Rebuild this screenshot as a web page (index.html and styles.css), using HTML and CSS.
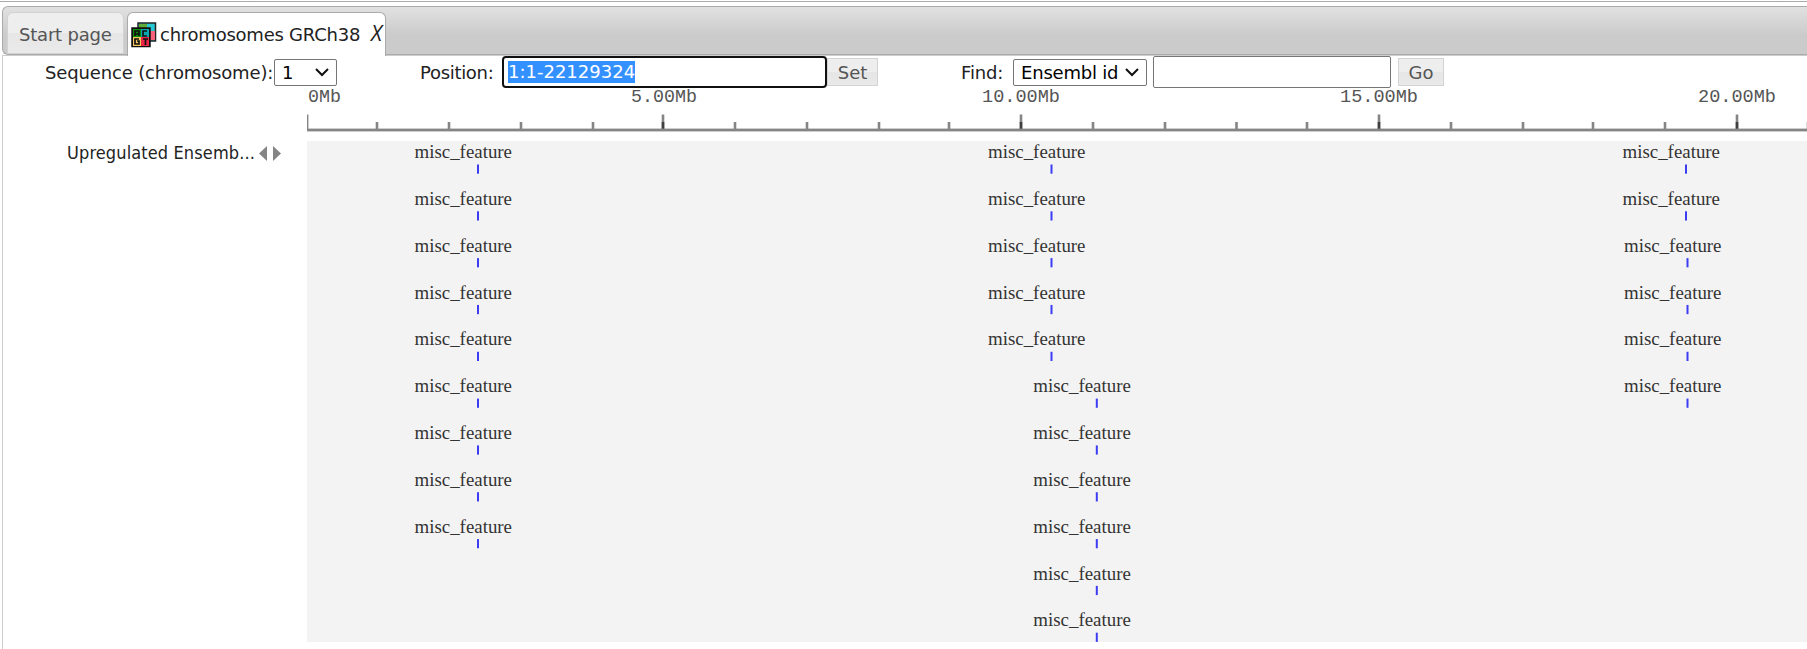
FILE: index.html
```html
<!DOCTYPE html>
<html lang="en">
<head>
<meta charset="utf-8">
<title>Genome browser</title>
<link rel="stylesheet" href="styles.css">
</head>
<body>
<div class="tabs">
  <div class="tab"><span class="t-start">Start page</span></div>
  <div class="tab active">
    <svg class="logo" width="26" height="26" viewBox="0 0 26 26">
      <rect x="7" y="1" width="17.5" height="18" fill="#29c8d2" stroke="#222" stroke-width="1.5"/>
      <path d="M8 2h8v6H8z" fill="#60aa38"/><path d="M18 9h6v9h-6z" fill="#f6607a"/>
      <rect x="1" y="6" width="18" height="18.5" fill="#111" stroke="#111" stroke-width="1.5"/>
      <path d="M2 7h8v8H2z" fill="#079008"/><path d="M10 7h8v8h-8z" fill="#0aa6b2"/>
      <path d="M2 15h8v9H2z" fill="#f5c45b"/><path d="M10 15h8v9h-8z" fill="#ec2448"/>
      <path d="M4 14V9h4v5M4 12h4M16 9h-4v5h4M8 17H4v5h4v-3H6M12 17h5M14.500 17v6" fill="none" stroke="#111" stroke-width="1.7"/>
    </svg>
    <span class="t-chrom">chromosomes GRCh38</span><span class="close">X</span>
  </div>
</div>
<main class="panel">
  <div class="toolbar">
    <span class="label l-seq">Sequence (chromosome):</span>
    <div class="select s-seq"><span>1</span><svg width="14" height="9" viewBox="0 0 14 9"><path d="M1 1l6 6 6-6"/></svg></div>
    <span class="label l-pos">Position:</span>
    <div class="input focus"><span class="sel">1:1-22129324</span></div>
    <div class="btn b-set">Set</div>
    <span class="label l-find">Find:</span>
    <div class="select s-find"><span>Ensembl id</span><svg width="14" height="9" viewBox="0 0 14 9"><path d="M1 1l6 6 6-6"/></svg></div>
    <div class="input find"></div>
    <div class="btn b-go">Go</div>
  </div>
  <div class="view">
    <div class="names"><span class="track">Upregulated Ensemb...</span><svg width="22" height="15" viewBox="0 0 22 15"><path d="M8 0v15L0 7.500zM14 0v15l8-7.500z" fill="#858585"/></svg></div>
    <svg class="plot" id="plot" width="1500" height="561" viewBox="307 88 1500 561"></svg>
  </div>
</main>
<script src="plot.js"></script>
</body>
</html>
```
FILE: plot.js
```js
const plot = document.getElementById('plot');
function add(name, attrs, text) {
  const el = document.createElementNS('http://www.w3.org/2000/svg', name);
  for (const key in attrs) el.setAttribute(key, attrs[key]);
  if (text) el.textContent = text;
  plot.appendChild(el);
}
add('rect', { x: 307, y: 141, width: 1500, height: 501, class: 'bg' });

// Ruler
[377, 449, 521, 593, 663, 735, 807, 879, 949, 1021, 1093, 1165, 1236.5, 1307, 1379, 1451, 1523, 1593, 1665, 1737, 1808]
  .forEach(x => add('rect', { x: x - 1.3, y: 122, width: 2.6, height: 8, class: 'minor' }));
[663, 1021, 1379, 1737].forEach(x => {
  add('rect', { x: x - 1.3, y: 114.5, width: 2.6, height: 8, class: 'minor' });
  add('rect', { x: x - 1.3, y: 122, width: 2.6, height: 8, class: 'major' });
});
add('rect', { x: 307, y: 128.6, width: 1500, height: 2.8, class: 'minor' });
add('rect', { x: 307, y: 114.5, width: 1.4, height: 16, class: 'minor' });
[['0Mb', 308, 33], ['5.00Mb', 631, 66], ['10.00Mb', 982, 78], ['15.00Mb', 1340, 78], ['20.00Mb', 1698, 78]]
  .forEach(([t, x, w]) => add('text', { x, y: 102, textLength: w, lengthAdjust: 'spacingAndGlyphs', class: 'scale' }, t));

// Features: label x, marker x, first row, last row
[[414.5, 478, 0, 8], [988, 1051.5, 0, 4], [1033.3, 1096.8, 5, 10], [1622.5, 1686, 0, 1], [1624, 1687.5, 2, 5]]
  .forEach(([x, mark, from, to]) => {
    for (let r = from; r <= to; r++) {
      const y = r * 46.82;
      add('text', { x, y: 158.2 + y, textLength: 97.5, lengthAdjust: 'spacingAndGlyphs', class: 'feature' }, 'misc_feature');
      add('rect', { x: mark - 1, y: 164.5 + y, width: 2, height: 9.2, class: 'mark' });
    }
  });
```
FILE: styles.css
```css
* { box-sizing: border-box; }
body { margin: 0; height: 649px; overflow: hidden; background: #fff; border-top: 1px solid #fff; padding-left: 2px; font: 18px "DejaVu Sans", sans-serif; color: #222; position: relative; }
body::before { content: ""; position: absolute; left: 0; right: 0; top: 0; height: 1px; background: #aaa; }
.tabs { height: 49px; margin-top: 5px; display: flex; align-items: flex-start; gap: 3px; padding: 5px 0 0 4px; border: 1px solid #aaa; border-right: 0; border-radius: 6px 0 0 6px; background: linear-gradient(#e1e1e1, #cbcbcb 60%); }
.tab { width: 117px; height: 42px; padding-left: 11px; border: 1px solid #d3d3d3; border-radius: 6px 6px 0 0; background: linear-gradient(#eee 50%, #e6e6e6 50%, #eaeaea); color: #555; line-height: 43px; white-space: nowrap; letter-spacing: -0.2px; }
.tab.active { width: 259px; height: 44px; padding-left: 3px; display: flex; border-color: #aaa; border-bottom: 0; background: #fff; color: #222; z-index: 1; }
.logo { margin-top: 9px; flex: none; }
.t-chrom { width: 210px; margin-left: 3px; letter-spacing: -0.24px; }
.close { line-height: 40px; font-family: "Open Sans", sans-serif; font-size: 21px; font-style: italic; margin-left: 1px; }
.panel { border-left: 1px solid #ccc; border-top: 1px solid #ccc; height: 594px; }
.toolbar { height: 32px; display: flex; align-items: center; white-space: nowrap; }
.label { flex: none; letter-spacing: -0.15px; }
.l-seq { width: 229px; margin-left: 42px; }
.l-pos { width: 82px; margin-left: 83px; letter-spacing: -0.3px; }
.l-find { width: 52px; margin-left: 83px; }
.select { flex: none; height: 27px; border: 1px solid #767676; border-radius: 2px; display: flex; align-items: center; justify-content: space-between; padding: 0 7px; color: #000; background: #fff; }
.select svg { flex: none; }
.select path { fill: none; stroke: #111; stroke-width: 2; }
.s-seq { width: 63px; }
.s-find { width: 134px; letter-spacing: -0.2px; }
.input { flex: none; height: 32px; border: 1px solid #767676; border-radius: 2px; }
.focus { width: 325px; border: 2px solid #101010; border-radius: 4px; padding: 3px 4px; }
.sel { display: inline-block; height: 22px; line-height: 22px; background: #3390ff; color: #fff; }
.find { width: 238px; margin-left: 6px; }
.btn { flex: none; height: 28px; border: 1px solid #d3d3d3; background: linear-gradient(#eee 50%, #e6e6e6 50%, #e9e9e9); color: #555; text-align: center; line-height: 27px; }
.b-set { width: 51px; }
.b-go { width: 46px; margin-left: 7px; }
.view { display: flex; }
.names { width: 304px; height: 561px; padding: 54px 0 0 64px; display: flex; align-items: flex-start; flex: none; }
.names svg { margin: 4px 0 0 4px; }
.track { width: 188px; font: 18px/22px "DejaVu Sans Condensed", "DejaVu Sans", sans-serif; letter-spacing: 0.12px; white-space: nowrap; }
.plot { display: block; flex: none; }
.bg { fill: #f3f3f3; }
.minor { fill: #858585; }
.major { fill: #404040; }
.mark { fill: #3c3cf5; }
.scale { font: 18.5px "Liberation Mono", monospace; fill: #555; }
.feature { font: 18px "Liberation Serif", serif; fill: #333; }
```
